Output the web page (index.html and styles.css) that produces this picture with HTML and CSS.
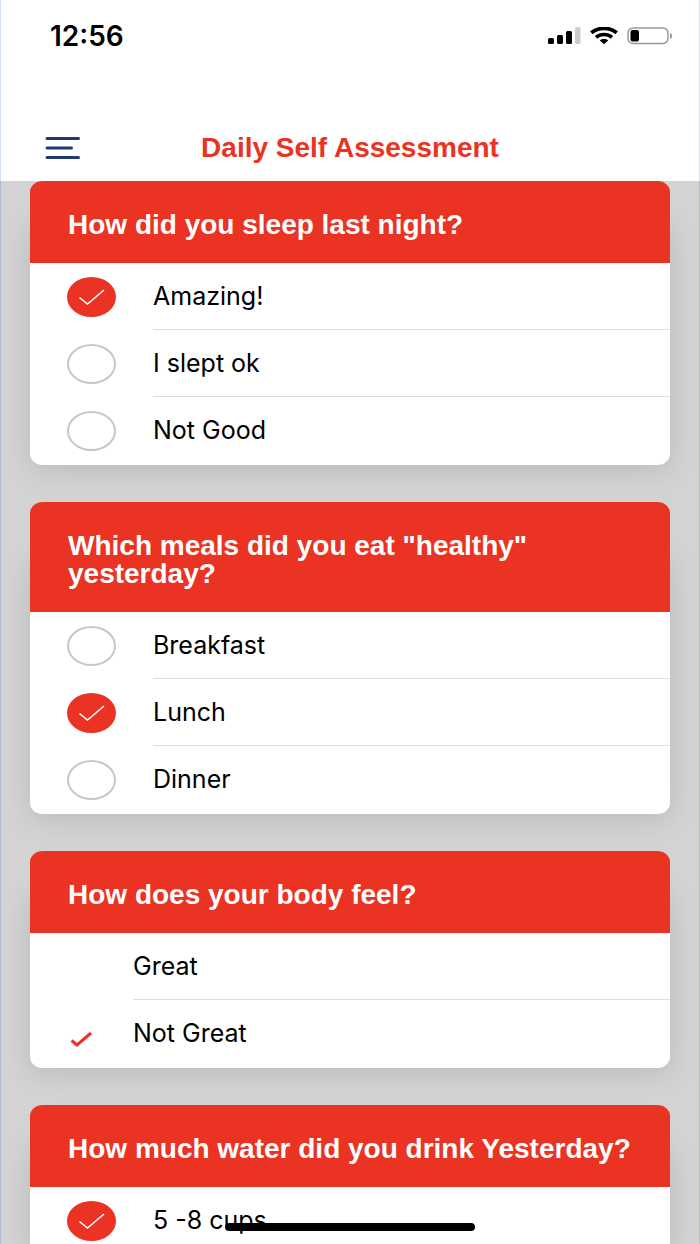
FILE: index.html
```html
<!DOCTYPE html>
<html lang="en">
<head>
<meta charset="utf-8">
<meta name="viewport" content="width=device-width, initial-scale=1">
<title>Daily Self Assessment</title>
<link rel="stylesheet" href="styles.css">
</head>
<body>
<svg class="defs" aria-hidden="true">
  <symbol id="tick" viewBox="0 0 48 40"><path d="M12 20.500l8 6.500L36.500 13" fill="none" stroke="#fff" stroke-width="1.600"/></symbol>
  <symbol id="tick-bold" viewBox="0 0 22 16"><path d="M1 9.500l5.500 4.500L20.500 2" fill="none" stroke="#ea3323" stroke-width="3"/></symbol>
</svg>
<div class="screen">
  <div class="status">
    <span class="time">12:56</span>
    <div class="status-icons">
      <svg width="33" height="18" viewBox="0 0 33 18" aria-hidden="true">
        <rect x="0" y="11" width="6" height="6" rx="1.500"/>
        <rect x="9" y="8" width="6" height="9" rx="1.500"/>
        <rect x="18" y="4" width="6" height="13" rx="1.500"/>
        <rect x="27" y="0" width="5.500" height="17" rx="1.500" fill="#ccc"/>
      </svg>
      <svg width="28" height="18" viewBox="0 0 28 18" aria-hidden="true">
        <path d="M1.300 5.800C8.500-.2 19.500-.2 26.700 5.800" fill="none" stroke="#000" stroke-width="3.800"/>
        <path d="M6 10.300C10.500 6.500 17.500 6.500 22 10.300" fill="none" stroke="#000" stroke-width="3.600"/>
        <path d="M9.800 13.500C12 11.600 16 11.600 18.200 13.500L14 17.200z"/>
      </svg>
      <svg width="46" height="18" viewBox="0 0 46 18" aria-hidden="true">
        <rect x="1" y="1" width="40" height="15.500" rx="5" fill="none" stroke="#999" stroke-width="1.500"/>
        <rect x="3.500" y="3" width="8.500" height="11.500" rx="2"/>
        <path d="M43 6v6c1.300-.5 2.200-1.600 2.200-3S44.300 6.500 43 6z" fill="#999"/>
      </svg>
    </div>
  </div>
  <header class="nav">
    <button class="menu" type="button" aria-label="Menu">
      <svg width="36" height="24" viewBox="0 0 36 24" aria-hidden="true"><path d="M2 2.500h31.500M2 12h24.500M2 21.500h31.500" stroke="#213a75" stroke-width="3" stroke-linecap="round"/></svg>
    </button>
    <h1 class="title">Daily Self Assessment</h1>
  </header>
  <main class="list">
    <fieldset class="card">
      <legend class="question">How did you sleep last night?</legend>
      <label class="option"><span class="mark"><input type="checkbox" class="oval" checked><svg class="tick"><use href="#tick"/></svg></span><span class="text">Amazing!</span></label>
      <label class="option"><span class="mark"><input type="checkbox" class="oval"><svg class="tick"><use href="#tick"/></svg></span><span class="text">I slept ok</span></label>
      <label class="option"><span class="mark"><input type="checkbox" class="oval"><svg class="tick"><use href="#tick"/></svg></span><span class="text">Not Good</span></label>
    </fieldset>
    <fieldset class="card">
      <legend class="question">Which meals did you eat "healthy" yesterday?</legend>
      <label class="option"><span class="mark"><input type="checkbox" class="oval"><svg class="tick"><use href="#tick"/></svg></span><span class="text">Breakfast</span></label>
      <label class="option"><span class="mark"><input type="checkbox" class="oval" checked><svg class="tick"><use href="#tick"/></svg></span><span class="text">Lunch</span></label>
      <label class="option"><span class="mark"><input type="checkbox" class="oval"><svg class="tick"><use href="#tick"/></svg></span><span class="text">Dinner</span></label>
    </fieldset>
    <fieldset class="card">
      <legend class="question">How does your body feel?</legend>
      <label class="option compact"><span class="mark"><input type="radio" name="body" class="plain"><svg class="tick"><use href="#tick-bold"/></svg></span><span class="text">Great</span></label>
      <label class="option compact"><span class="mark"><input type="radio" name="body" class="plain" checked><svg class="tick"><use href="#tick-bold"/></svg></span><span class="text">Not Great</span></label>
    </fieldset>
    <fieldset class="card">
      <legend class="question">How much water did you drink Yesterday?</legend>
      <label class="option"><span class="mark"><input type="checkbox" class="oval" checked><svg class="tick"><use href="#tick"/></svg></span><span class="text">5 -8 cups</span></label>
    </fieldset>
  </main>
  <div class="home-bar"></div>
</div>
</body>
</html>
```
FILE: styles.css
```css
* { box-sizing: border-box; }
body {
  margin: 0;
  font-family: Inter, "Liberation Sans", sans-serif;
  color: #000;
}
.defs { display: none; }
.screen {
  position: relative;
  display: flex;
  flex-direction: column;
  height: 100vh;
  overflow: hidden;
  background: #fff;
}
.screen::after {
  content: "";
  position: absolute;
  inset: 0;
  border: solid rgba(60, 110, 180, 0.22);
  border-width: 0 1px;
  pointer-events: none;
}
.status {
  display: flex;
  justify-content: space-between;
  align-items: center;
  height: 72px;
  padding: 0 27px 0 50px;
  flex: none;
}
.time { font-size: 28px; font-weight: 600; line-height: 32px; }
.status-icons { display: flex; gap: 9px; }
.nav {
  display: grid;
  grid-template-columns: 81px 1fr 81px;
  align-items: center;
  height: 109px;
  padding: 42px 0 0;
  flex: none;
}
.menu {
  display: flex;
  justify-content: flex-end;
  padding: 0;
  border: 0;
  background: none;
}
.title {
  margin: 0;
  color: #ea3323;
  font-family: "Liberation Sans", Arial, sans-serif;
  font-size: 28px;
  font-weight: 700;
  line-height: 28px;
  text-align: center;
}
.list {
  display: flex;
  flex-direction: column;
  gap: 37px;
  flex: 1;
  min-height: 0;
  padding: 0 30px;
  overflow: hidden;
  background: #d3d3d3;
}
.card {
  flex: none;
  min-width: 0;
  margin: 0;
  padding: 0 0 1px;
  border: 0;
  border-radius: 13px / 11px;
  background: #fff;
  box-shadow: 0 4px 28px rgba(0, 0, 0, 0.12);
}
.question {
  width: 100%;
  padding: 30px 30px 24px 38px;
  border-radius: 13px 13px 0 0 / 11px 11px 0 0;
  background: #ea3323;
  color: #fff;
  font-family: "Liberation Sans", Arial, sans-serif;
  font-size: 28px;
  font-weight: 700;
  line-height: 28px;
}
.option {
  display: grid;
  grid-template-columns: 86px 1fr;
  height: 67px;
  padding-left: 37px;
}
.compact { grid-template-columns: 66px 1fr; }
.mark {
  display: grid;
  align-content: center;
  justify-content: start;
}
.oval, .plain, .tick { grid-area: 1 / 1; }
.oval, .plain { appearance: none; margin: 0; }
.oval {
  width: 49px;
  height: 40px;
  border: 2px solid #c7c7c7;
  border-radius: 50%;
}
.oval:checked { border-color: #ea3323; background: #ea3323; }
.tick {
  width: 49px;
  height: 40px;
  visibility: hidden;
  pointer-events: none;
}
.plain { width: 28px; height: 26px; }
.compact .tick { width: 23px; height: 16px; place-self: end center; }
input:checked + .tick { visibility: visible; }
.text {
  display: flex;
  align-items: center;
  border-bottom: 1px solid #dedede;
  font-size: 25px;
  line-height: 28px;
}
.option:last-child .text { border-bottom-color: transparent; }
.home-bar {
  position: absolute;
  bottom: 13px;
  left: 50%;
  width: 250px;
  height: 8px;
  border-radius: 4px;
  background: #000;
  transform: translateX(-50%);
}
```
